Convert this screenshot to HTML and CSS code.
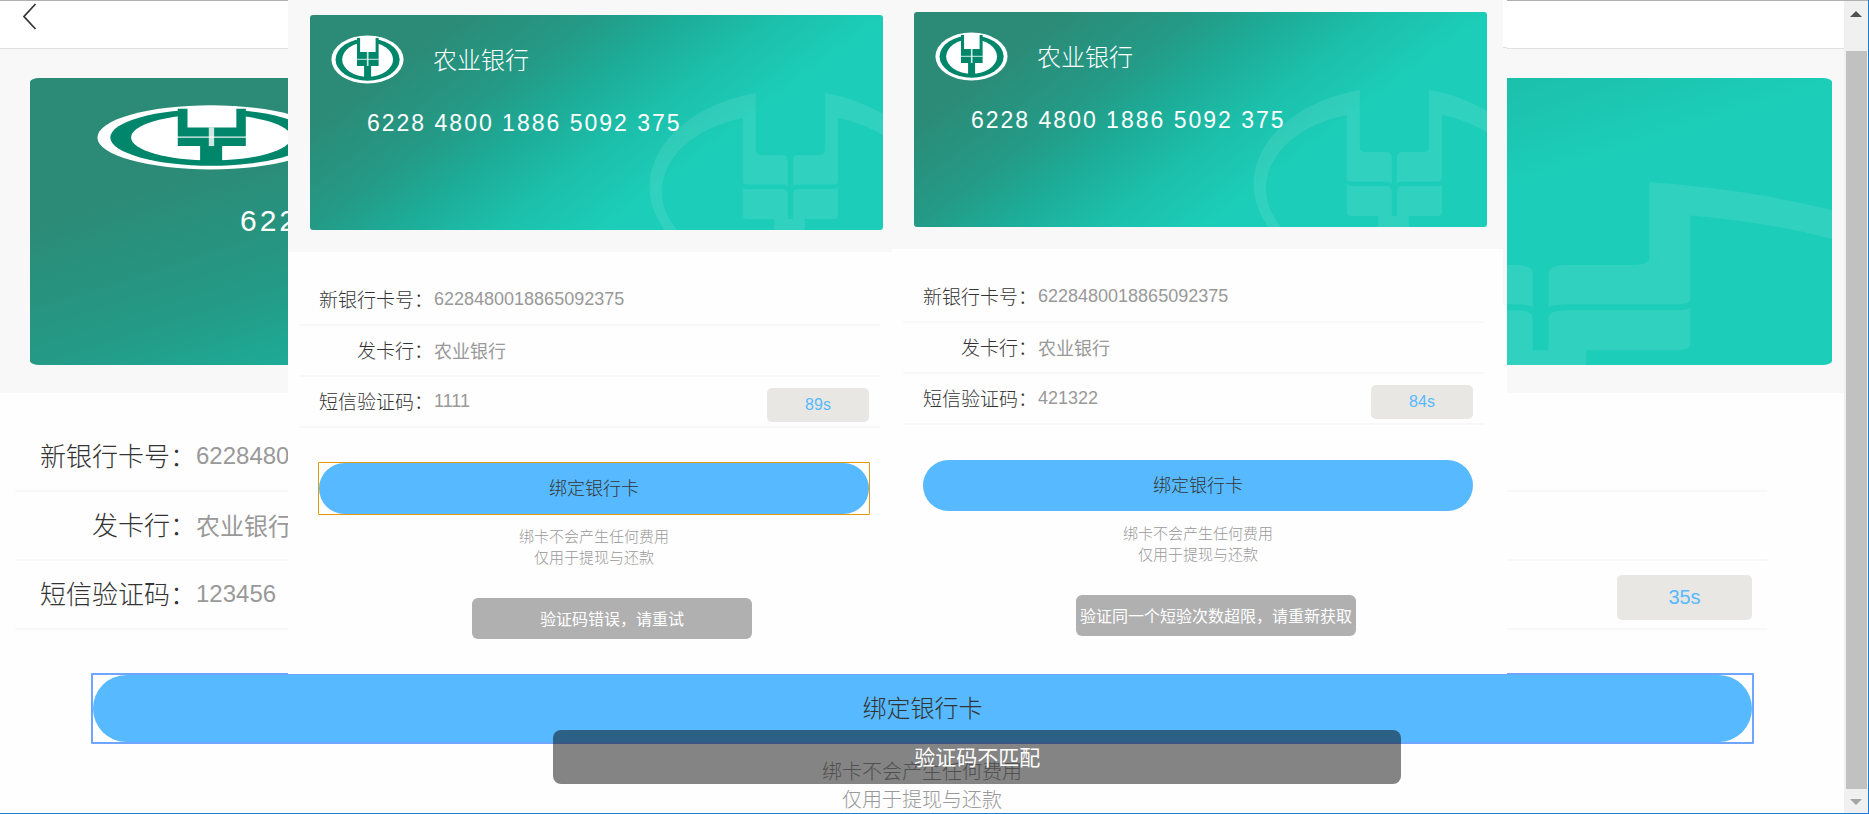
FILE: index.html
```html
<!DOCTYPE html>
<html lang="zh-CN">
<head>
<meta charset="utf-8">
<meta name="viewport" content="width=device-width, initial-scale=1">
<title>绑定银行卡</title>
<link rel="stylesheet" href="styles.css">
</head>
<body>
<svg class="defs" aria-hidden="true">
  <defs>
    <linearGradient id="card-fill" gradientUnits="userSpaceOnUse" x1="54" y1="72" x2="210" y2="280">
      <stop offset="0" stop-color="#2b8b77"/>
      <stop offset=".31" stop-color="#249a86"/>
      <stop offset=".5" stop-color="#1dab97"/>
      <stop offset=".73" stop-color="#1cbfaa"/>
      <stop offset="1" stop-color="#1cceb9"/>
    </linearGradient>
    <symbol id="card-art" viewBox="0 0 572 215" preserveAspectRatio="none">
      <rect width="572" height="215" rx="3" fill="url(#card-fill)"/>
      <g fill="#fff" fill-opacity=".09">
        <path d="M445 78A141 97 0 0 0 384 243H408A112 76.500 0 0 1 432 103V166Q432 169.500 436 169.500H471Q476 169.500 477 172V146Q477 140 471 140H450Q445 140 445 135Z"/>
        <path d="M514 78A141 97 0 0 1 575 243H551A112 76.500 0 0 0 527 103V166Q527 169.500 523 169.500H488Q483 169.500 482 172V146Q482 140 488 140H509Q514 140 514 135Z"/>
        <path d="M432 171Q432 174 436 174H472Q477 174 477 180V204H482V180Q482 174 488 174H523Q527 174 527 171V200Q527 204 522 204H494V215H463.500V204H437Q432 204 432 200Z"/>
      </g>
      <ellipse cx="57.400" cy="44.500" rx="36" ry="24" fill="#fff"/>
      <ellipse cx="57.500" cy="44.500" rx="32" ry="21.200" fill="#00866a"/>
      <ellipse cx="57.500" cy="44.500" rx="25.400" ry="17.300" fill="#fff"/>
      <path fill="#00866a" d="M46.900 23H68.500V51H61V64H54V51H46.900Z"/>
      <path fill="#fff" d="M50 21H65.500V37H50Z"/>
      <path stroke="#fff" stroke-opacity=".8" stroke-width="1.700" d="M57.600 37V51"/>
      <path stroke="#fff" stroke-opacity=".9" stroke-width=".9" d="M46.700 44.300H68.600"/>
    </symbol>
  </defs>
</svg>

<div class="window">
  <main class="page">
    <header class="topbar">
      <button class="back" type="button" aria-label="返回">
        <svg width="14" height="28" viewBox="0 0 14 28" aria-hidden="true"><path d="M12.500 1 1 13.500 12.500 26" fill="none" stroke="#333" stroke-width="1.700"/></svg>
      </button>
    </header>
    <div class="hero">
      <div class="card">
        <svg class="card-art" preserveAspectRatio="none" aria-hidden="true"><use href="#card-art"/></svg>
        <div class="card-number">6228 4800 1886 5092 375</div>
      </div>
    </div>
    <form class="form">
      <div class="row"><label for="no0">新银行卡号：</label><input id="no0" value="6228480018865092375"></div>
      <div class="row"><label for="bank0">发卡行：</label><input id="bank0" value="农业银行"></div>
      <div class="row"><label for="code0">短信验证码：</label><input id="code0" value="123456"><button class="count" type="button">35s</button></div>
      <button class="submit focus-blue" type="button">绑定银行卡</button>
      <p class="note">绑卡不会产生任何费用<br>仅用于提现与还款</p>
    </form>
    <div class="toast page-toast" role="status">验证码不匹配</div>
  </main>
  <div class="scrollbar" aria-hidden="true">
    <svg width="12" height="6" viewBox="0 0 12 6"><path d="M0 6 6 0l6 6Z" fill="#505050"/></svg>
    <span class="thumb"></span>
    <svg width="12" height="6" viewBox="0 0 12 6"><path d="M0 0 6 6l6-6Z" fill="#a3a3a3"/></svg>
  </div>

  <div class="panels">
    <section class="panel panel-first">
      <div class="hero">
        <div class="card">
          <svg class="card-art" preserveAspectRatio="none" aria-hidden="true"><use href="#card-art"/></svg>
          <div class="card-bank">农业银行</div>
          <div class="card-number">6228 4800 1886 5092 375</div>
        </div>
      </div>
      <form class="form">
        <div class="row"><label for="no1">新银行卡号：</label><input id="no1" value="6228480018865092375"></div>
        <div class="row"><label for="bank1">发卡行：</label><input id="bank1" value="农业银行"></div>
        <div class="row"><label for="code1">短信验证码：</label><input id="code1" value="1111"><button class="count" type="button">89s</button></div>
        <button class="submit focus-amber" type="button">绑定银行卡</button>
        <p class="note">绑卡不会产生任何费用<br>仅用于提现与还款</p>
      </form>
      <div class="toast" role="status">验证码错误，请重试</div>
    </section>
    <section class="panel panel-second">
      <div class="hero">
        <div class="card">
          <svg class="card-art" preserveAspectRatio="none" aria-hidden="true"><use href="#card-art"/></svg>
          <div class="card-bank">农业银行</div>
          <div class="card-number">6228 4800 1886 5092 375</div>
        </div>
      </div>
      <form class="form">
        <div class="row"><label for="no2">新银行卡号：</label><input id="no2" value="6228480018865092375"></div>
        <div class="row"><label for="bank2">发卡行：</label><input id="bank2" value="农业银行"></div>
        <div class="row"><label for="code2">短信验证码：</label><input id="code2" value="421322"><button class="count" type="button">84s</button></div>
        <button class="submit" type="button">绑定银行卡</button>
        <p class="note">绑卡不会产生任何费用<br>仅用于提现与还款</p>
      </form>
      <div class="toast" role="status">验证同一个短验次数超限，请重新获取</div>
    </section>
  </div>
</div>
</body>
</html>
```

FILE: styles.css
```css
* { box-sizing: border-box; }

body {
  margin: 0;
  background: #fefefe;
  color: #333;
  font-family: "Liberation Sans", "Noto Sans CJK SC", sans-serif;
}

button, input {
  border: 0;
  padding: 0;
  margin: 0;
  background: none;
  color: inherit;
  font: inherit;
}

.defs { position: absolute; width: 0; height: 0; }

.window {
  position: relative;
  display: flex;
  height: 100vh;
  overflow: hidden;
  border-right: 1px solid #1a7fd4;
  border-bottom: 1px solid #1a7fd4;
}

.page { position: relative; flex: 1; min-width: 0; overflow: hidden; }

.topbar {
  height: 49px;
  padding: 2px 23px;
  border-top: 1px solid #b0b0b0;
  border-bottom: 1px solid #e0e0e0;
  background: #fff;
}
.back { display: block; }
.back svg { display: block; }

.hero { padding: 29px 12px 28px 30px; background: #f8f8f8; }

.card {
  position: relative;
  height: 287px;
  padding: 125px 0 0 210px;
  color: #fff;
}
.card-art { position: absolute; inset: 0; width: 100%; height: 100%; }
.card-bank, .card-number { position: relative; white-space: nowrap; }
.card-number { font-size: 30px; line-height: 36px; letter-spacing: 3px; }
.card-bank { font-size: 24px; line-height: 28px; font-weight: 300; }

.form { padding: 30px 77px 0 15px; }

.row {
  display: flex;
  align-items: center;
  height: 69px;
  border-bottom: 2px solid #f8f8f8;
}
.row label {
  width: 181px;
  flex: none;
  padding-bottom: 4px;
  text-align: right;
  font-size: 26px;
  font-weight: 300;
  white-space: nowrap;
}
.row input { flex: 1; min-width: 0; padding-bottom: 2px; color: #999; font-size: 24px; }

.count {
  align-self: flex-end;
  width: 135px;
  height: 45px;
  margin: 0 15px 8px 0;
  border-radius: 5px;
  background: #e8e7e3;
  color: #57b9ff;
  font-size: 20px;
}

.submit {
  display: block;
  width: calc(100% - 93px);
  height: 67px;
  margin: 45px 15px 0 78px;
  padding-bottom: 4px;
  border-radius: 34px;
  background: #57b9ff;
  font-size: 24px;
  font-weight: 300;
}
/* The focus frame stays square around the rounded button */
.focus-blue, .focus-amber { position: relative; }
.focus-blue::after, .focus-amber::after {
  content: "";
  position: absolute;
  inset: -2px;
  border: 2px solid #70a5ff;
  border-radius: 1px;
}
.focus-amber::after { inset: -1px; border: 1px solid #e59a0a; }

.note {
  margin: 16px -62px 0 0;
  text-align: center;
  color: #999;
  font-size: 20px;
  font-weight: 300;
  line-height: 28px;
}

.toast {
  display: flex;
  align-items: center;
  justify-content: center;
  padding-bottom: 2px;
  color: #fff;
  white-space: nowrap;
}
.page-toast {
  position: absolute;
  top: 730px;
  left: 30%;
  width: 46%;
  height: 54px;
  border-radius: 8px;
  background: rgba(0, 0, 0, .48);
  font-size: 21px;
}

.scrollbar {
  display: flex;
  flex-direction: column;
  align-items: center;
  gap: 10px;
  width: 24px;
  padding: 10px 0 8px;
  border-top: 1px solid #b0b0b0;
  background: #f0f0f0;
}
.scrollbar svg { flex: none; }
.thumb { flex: 1; width: 21px; margin: 24px 0 0; background: #c1c1c1; }

.panels {
  position: absolute;
  top: 0;
  left: 288px;
  right: 361px;
  display: grid;
  grid-template-columns: 604fr 615fr;
}
.panel { position: relative; min-height: 674px; background: #fefefe; }
.panel .hero { padding: 15px 9px 22px 22px; }
.panel .card { height: 215px; padding: 32px 0 0 57px; }
.panel .card-bank { padding-left: 66px; }
.panel .card-number { margin-top: 34px; font-size: 23px; line-height: 28px; letter-spacing: 2px; }
.panel .form { padding: 23px 12px 0 11px; }
.panel .row { height: 51px; }
.panel .row label { width: 134px; padding-bottom: 2px; font-size: 19px; }
.panel .row input { padding: 0 0 1px 1px; font-size: 18px; }
.panel .count { width: 102px; height: 34px; margin: 0 11px 4px 0; font-size: 16px; }
.panel .submit {
  width: calc(100% - 31px);
  height: 51px;
  margin: 35px 11px 0 20px;
  padding-bottom: 3px;
  border-radius: 26px;
  font-size: 18px;
}
.panel .note { margin: 12px 0 0; padding: 0 0 0 9px; font-size: 15px; line-height: 21px; }
.panel .toast {
  width: 280px;
  height: 41px;
  margin: 30px 0 0 184px;
  border-radius: 6px;
  background: #b0b0b0;
  font-size: 16px;
}

.panel-second .hero { padding: 12px 20px 22px 22px; }
.panel-second .form { padding-right: 23px; }
.panel-second::after {
  content: "";
  position: absolute;
  top: 0;
  right: 0;
  width: 4px;
  height: 305px;
  background: linear-gradient(#fff 47px, #e0e0e0 47px 48px, #f8f8f8 48px);
}
```
